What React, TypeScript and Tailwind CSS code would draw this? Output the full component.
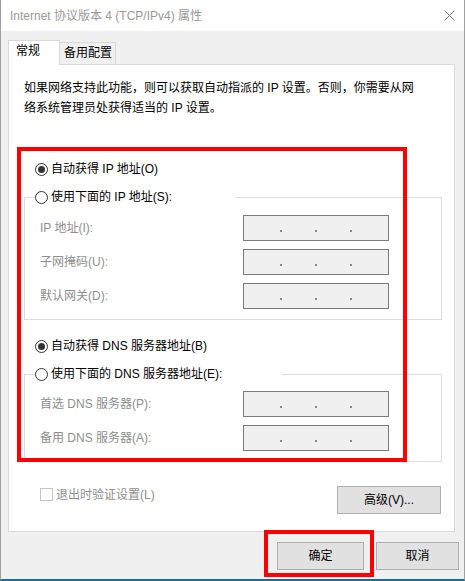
const FONT = "font-['Liberation_Sans','Noto_Sans_CJK_SC',sans-serif]";

function Radio({ checked, label }: { checked?: boolean; label: string }) {
  return (
    <span className="flex h-4 items-center leading-4 text-black">
      <span className="flex h-[13px] w-[13px] shrink-0 items-center justify-center rounded-full border border-[#333] bg-white">
        {checked ? <span className="h-[7px] w-[7px] rounded-full bg-[#333]" /> : null}
      </span>
      <span className="ml-[3px] whitespace-nowrap">{label}</span>
    </span>
  );
}

function IpBox() {
  return (
    <div className="flex h-[26px] w-[146px] items-start gap-[33px] border border-[#7a7a7a] bg-[#f0f0f0] pl-[36px] pt-[14px]">
      <span className="h-[2px] w-[2px] bg-[#8a8a8a]" />
      <span className="h-[2px] w-[2px] bg-[#8a8a8a]" />
      <span className="h-[2px] w-[2px] bg-[#8a8a8a]" />
    </div>
  );
}

function Field({ label }: { label: string }) {
  return (
    <div className="flex items-center">
      <span className="w-[203px] whitespace-nowrap leading-4 text-[#8e8e8e]">{label}</span>
      <IpBox />
    </div>
  );
}

export default function App() {
  return (
    <div
      className={`relative flex h-[581px] w-[465px] flex-col overflow-hidden border-x border-b-2 border-x-[#a0a0a0] border-b-[#1a6e8e] bg-[#f0f0f0] text-[12px] ${FONT}`}
    >
      {/* title bar */}
      <div className="flex h-[31px] shrink-0 items-center bg-white pl-[9px] pr-[9px]">
        <span className="whitespace-nowrap leading-4 text-[#999]">Internet 协议版本 4 (TCP/IPv4) 属性</span>
        <svg className="ml-auto" width="11" height="11" viewBox="0 0 11 11">
          <path d="M0.5 0.5 L10.5 10.5 M10.5 0.5 L0.5 10.5" stroke="#777" strokeWidth="1" fill="none" />
        </svg>
      </div>

      <div className="flex flex-col pt-[9px]">
        {/* tabs */}
        <div className="flex h-[24px] items-end pl-[7px]">
          <div className="relative z-10 -mb-px h-[25px] w-[52px] border-x border-t border-[#d9d9d9] bg-white pl-[7px] leading-[20px] text-black">
            常规
          </div>
          <div className="h-[22px] w-[56px] border-r border-t border-[#d9d9d9] bg-[#f0f0f0] pl-[4px] leading-[20px] text-black">
            备用配置
          </div>
        </div>

        {/* panel */}
        <div className="ml-[7px] flex h-[468px] w-[447px] flex-col border border-[#d9d9d9] bg-white">
          <p className="whitespace-nowrap pl-[15px] pt-[13px] leading-[20px] text-black">
            如果网络支持此功能，则可以获取自动指派的 IP 设置。否则，你需要从网
            <br />
            络系统管理员处获得适当的 IP 设置。
          </p>

          <div className="ml-[26px] mt-[43px]">
            <Radio checked label="自动获得 IP 地址(O)" />
          </div>

          <fieldset className="ml-[15px] mt-[12px] w-[418px] border border-[#dcdcdc] pb-[10px]">
            <legend className="ml-[10px] h-4 w-[200px]">
              <Radio label="使用下面的 IP 地址(S):" />
            </legend>
            <div className="mt-[10px] flex flex-col gap-2 pl-[15px]">
              <Field label="IP 地址(I):" />
              <Field label="子网掩码(U):" />
              <Field label="默认网关(D):" />
            </div>
          </fieldset>

          <div className="ml-[26px] mt-[18px]">
            <Radio checked label="自动获得 DNS 服务器地址(B)" />
          </div>

          <fieldset className="ml-[15px] mt-[12px] w-[418px] border border-[#dcdcdc] pb-[10px]">
            <legend className="ml-[10px] h-4 w-[247px]">
              <Radio label="使用下面的 DNS 服务器地址(E):" />
            </legend>
            <div className="mt-[9px] flex flex-col gap-2 pl-[15px]">
              <Field label="首选 DNS 服务器(P):" />
              <Field label="备用 DNS 服务器(A):" />
            </div>
          </fieldset>

          <div className="mt-[24px] flex items-start pl-[31px] pr-[13px]">
            <span className="mt-[2px] h-[13px] w-[13px] border border-[#c4c4c4] bg-white" />
            <span className="ml-[3px] mt-[1px] whitespace-nowrap leading-4 text-[#8e8e8e]">退出时验证设置(L)</span>
            <button
              type="button"
              className="ml-auto h-[28px] w-[104px] border border-[#adadad] bg-[#e1e1e1] leading-4 text-black"
            >
              高级(V)...
            </button>
          </div>
        </div>

        {/* dialog buttons */}
        <div className="mt-[10px] flex justify-end gap-[12px] pr-[5px]">
          <button type="button" className="h-[28px] w-[87px] border border-[#adadad] bg-[#e1e1e1] leading-4 text-black">
            确定
          </button>
          <button type="button" className="h-[28px] w-[83px] border border-[#adadad] bg-[#e1e1e1] leading-4 text-black">
            取消
          </button>
        </div>
      </div>

      {/* red annotation boxes */}
      <div className="pointer-events-none absolute left-[16px] top-[147px] h-[315px] w-[390px] border-4 border-[#ff0000]" />
      <div className="pointer-events-none absolute left-[263px] top-[530px] h-[47px] w-[110px] border-4 border-[#ff0000]" />
    </div>
  );
}
